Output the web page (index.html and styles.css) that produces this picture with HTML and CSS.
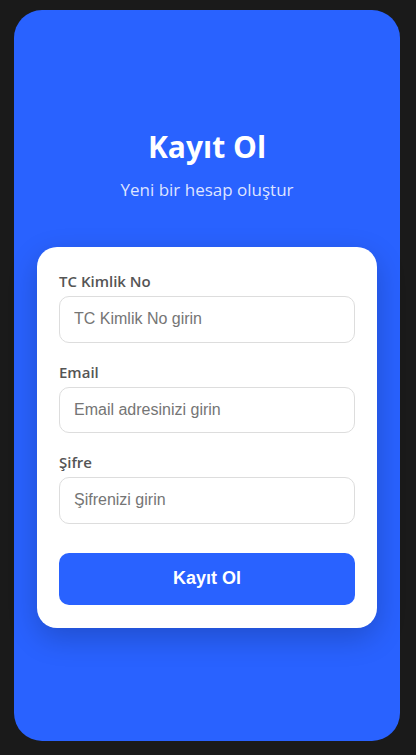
FILE: index.html
```html
<!DOCTYPE html>
<html lang="tr">
<head>
<meta charset="utf-8">
<title>Kayıt Ol</title>
<link rel="stylesheet" href="styles.css">
</head>
<body>
<div class="screen">
  <div class="header">
    <h1 class="title">Kayıt Ol</h1>
    <p class="subtitle">Yeni bir hesap oluştur</p>
  </div>
  <form class="card">
    <div class="field">
      <label class="label">TC Kimlik No</label>
      <input class="input" type="text" placeholder="TC Kimlik No girin">
    </div>
    <div class="field">
      <label class="label">Email</label>
      <input class="input" type="email" placeholder="Email adresinizi girin">
    </div>
    <div class="field">
      <label class="label">Şifre</label>
      <input class="input" type="password" placeholder="Şifrenizi girin">
    </div>
    <button class="button" type="button">Kayıt Ol</button>
  </form>
</div>
</body>
</html>
```
FILE: styles.css
```css
* { box-sizing: border-box; }
html, body { margin: 0; padding: 0; }
body {
  background: #1a1a1a;
  width: 416px;
  height: 755px;
  padding: 10px 16px 14px 14px;
  font-family: "Open Sans", "Noto Sans", sans-serif;
}
.screen {
  background: #2962ff;
  border-radius: 28px;
  height: 731px;
  width: 386px;
  display: flex;
  flex-direction: column;
  padding: 119px 23px 0;
}
.header {
  text-align: center;
  color: #fff;
  margin-bottom: 46px;
}
.title {
  margin: 0;
  font-size: 30px;
  line-height: 36px;
  font-weight: 700;
}
.subtitle {
  margin: 14px 0 0;
  font-size: 17px;
  line-height: 22px;
  color: rgba(255,255,255,0.85);
}
.card {
  background: #fff;
  border-radius: 20px;
  padding: 25px 22px 23px;
  box-shadow: 0 10px 30px rgba(0,0,0,0.2);
}
.field {
  display: flex;
  flex-direction: column;
  margin-bottom: 20px;
}
.label {
  font-size: 15px;
  line-height: 18px;
  font-weight: 600;
  color: #555;
  margin-bottom: 6px;
}
.input {
  height: 46.5px;
  border: 1px solid #ddd;
  border-radius: 10px;
  padding: 0 14px;
  font-family: "Liberation Sans", Arial, sans-serif;
  font-size: 16px;
  color: #333;
  outline: none;
}
.input::placeholder { color: #757575; }
.button {
  display: block;
  width: 100%;
  height: 52px;
  margin-top: 29px;
  border: none;
  border-radius: 10px;
  background: #2962ff;
  color: #fff;
  font-family: "Liberation Sans", Arial, sans-serif;
  font-size: 18px;
  font-weight: 700;
}
```
